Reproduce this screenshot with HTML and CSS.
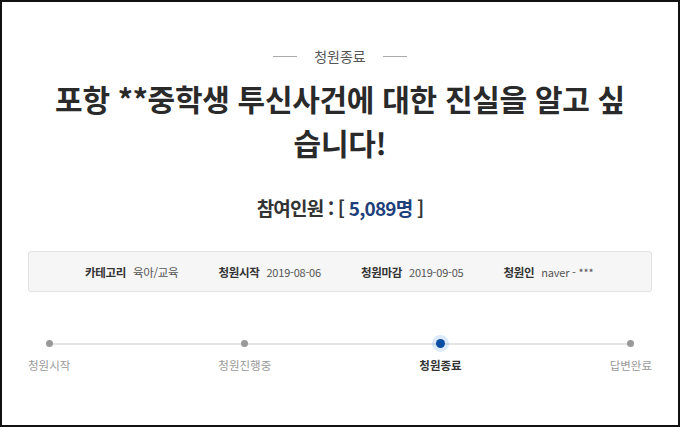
FILE: index.html
```html
<!DOCTYPE html>
<html lang="ko">

<head>
    <meta charset="UTF-8">
    <meta name="viewport" content="width=device-width, initial-scale=1.0">
    <title>청원종료</title>

    <link rel="stylesheet" href="styles.css">
</head>

<body>
    <div class="frame">
        <div class="petition">
            <p class="status"><span class="dash"></span>청원종료<span class="dash"></span></p>
            <h1 class="title">포항 **중학생 투신사건에 대한 진실을 알고 싶습니다!</h1>
            <h2 class="count">참여인원 : [ <span class="num">5,089명</span> ]</h2>

            <ul class="info">
                <li><strong>카테고리</strong> <span>육아/교육</span></li>
                <li><strong>청원시작</strong> <span class="val">2019-08-06</span></li>
                <li><strong>청원마감</strong> <span class="val">2019-09-05</span></li>
                <li><strong>청원인</strong> <span class="val">naver - ***</span></li>
            </ul>

            <ol class="progress">
                <li><span class="dot"></span>청원시작</li>
                <li><span class="dot"></span>청원진행중</li>
                <li class="active"><span class="dot"></span>청원종료</li>
                <li><span class="dot"></span>답변완료</li>
            </ol>
        </div>
    </div>
</body>

</html>
```

FILE: styles.css
```css
body {
    font-family: "Noto Sans CJK KR", "Noto Sans", sans-serif;
    margin: 0;
    padding: 0;
    background-color: #fff;
    color: #333;
}

.frame {
    width: 680px;
    height: 427px;
    box-sizing: border-box;
    border: 2px solid #111;
    background-color: #fff;
}

.petition {
    padding: 0 26px;
}

.status {
    margin: 42px 0 0;
    display: flex;
    justify-content: center;
    align-items: center;
    gap: 17px;
    font-size: 14px;
    line-height: 24px;
    color: #555;
}

.dash {
    width: 24px;
    height: 1px;
    background-color: #aaa;
}

.title {
    margin: 8px auto 0;
    width: 580px;
    text-align: center;
    font-size: 30px;
    font-weight: bold;
    line-height: 44px;
    color: #2a2a2a;
    letter-spacing: -0.3px;
    word-break: break-all;
}

.count {
    margin: 30px 0 0;
    text-align: center;
    font-size: 19px;
    font-weight: bold;
    line-height: 28px;
    color: #333;
    letter-spacing: -0.8px;
}

.num {
    color: #1e3f7a;
}

.info {
    list-style: none;
    margin: 29px 0 0;
    padding: 0 0 0 56px;
    height: 41px;
    box-sizing: border-box;
    display: flex;
    align-items: center;
    gap: 40px;
    background-color: #f6f6f6;
    border: 1px solid #e2e2e2;
    border-radius: 3px;
    font-size: 11.5px;
    color: #555;
    letter-spacing: -0.3px;
}

.info strong {
    color: #333;
    margin-right: 4px;
}

.info .val {
    font-size: 11px;
    letter-spacing: -0.2px;
}

.progress {
    list-style: none;
    margin: 40px 0 0;
    padding: 0;
    display: flex;
    justify-content: space-between;
    position: relative;
    font-size: 11.5px;
    color: #999;
}

.progress::before {
    content: "";
    position: absolute;
    left: 20px;
    right: 20px;
    top: 11px;
    height: 2px;
    background-color: #e4e4e4;
}

.progress li {
    display: flex;
    flex-direction: column;
    align-items: center;
    gap: 2px;
    position: relative;
}

.dot {
    width: 7px;
    height: 7px;
    margin: 8px 0;
    border-radius: 50%;
    background-color: #999;
}

.progress .active {
    color: #333;
    font-weight: bold;
}

.progress .active .dot {
    width: 9px;
    height: 9px;
    margin: 7px 0;
    background-color: #0b4ea2;
    box-shadow: 0 0 0 4px rgba(80, 150, 230, 0.2);
}
```
